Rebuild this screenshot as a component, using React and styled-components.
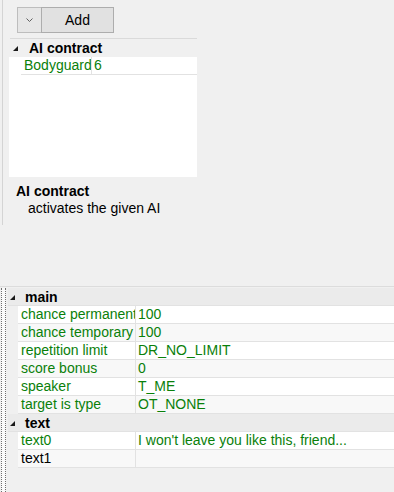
import React from 'react';
import styled, { createGlobalStyle } from 'styled-components';

const GlobalStyle = createGlobalStyle`
  html, body {
    margin: 0;
    padding: 0;
    background: #f0f0f0;
  }
  body {
    font-family: "Liberation Sans", Arial, sans-serif;
    font-size: 14px;
    color: #000;
  }
`;

const Page = styled.div`
  width: 394px;
  height: 492px;
  display: flex;
  flex-direction: column;
  overflow: hidden;
`;

const Top = styled.div`
  height: 286px;
  display: flex;
  align-items: flex-start;
`;

const LeftRule = styled.div`
  width: 1px;
  height: 225px;
  margin-left: 2px;
  background: #d4d4d4;
`;

const Panel = styled.div`
  width: 188px;
  margin-left: 6px;
  display: flex;
  flex-direction: column;
`;

const Toolbar = styled.div`
  display: flex;
  height: 31px;
  padding: 7px 0 0 8px;
  box-sizing: border-box;
`;

const DropButton = styled.button`
  width: 25px;
  height: 26px;
  padding: 0;
  border: 1px solid #bdbdbd;
  background: #e6e6e6;
  display: flex;
  align-items: center;
  justify-content: center;
`;

const AddButton = styled.button`
  width: 73px;
  height: 26px;
  margin-left: -1px;
  padding: 0;
  border: 1px solid #adadad;
  background: #e1e1e1;
  font-family: inherit;
  font-size: 14px;
  color: #000;
`;

const Rule = styled.div`
  height: 1px;
  margin: 7px 0 0 1px;
  background: #dadada;
`;

const Category = styled.div`
  height: 18px;
  display: flex;
  align-items: center;
  font-weight: bold;
  background: ${p => (p.$shade ? '#ebebeb' : 'transparent')};
  border-bottom: ${p => (p.$shade ? '1px solid #e2e2e2' : 'none')};
  box-sizing: border-box;
`;

const Glyph = styled.svg`
  width: 5px;
  height: 5px;
  margin: 1px ${p => p.$gap}px 0 ${p => p.$indent}px;
  flex: none;
`;

const ListBox = styled.div`
  height: 120px;
  background: #fff;
`;

const Row = styled.div`
  display: flex;
  height: 18px;
  padding-left: ${p => p.$margin}px;
  box-sizing: border-box;
`;

const Cells = styled.div`
  flex: 1;
  display: flex;
  background: ${p => (p.$alt ? '#f8f8f8' : '#fff')};
  border-bottom: 1px solid #e2e2e2;
`;

const Label = styled.div`
  width: ${p => p.$width}px;
  padding-left: 3px;
  box-sizing: border-box;
  border-right: 1px solid #e2e2e2;
  line-height: 17px;
  white-space: nowrap;
  overflow: hidden;
  color: ${p => (p.$set ? '#0a800a' : '#000')};
`;

const Value = styled.div`
  flex: 1;
  padding-left: 2px;
  line-height: 17px;
  white-space: nowrap;
  color: #0a800a;
`;

const Help = styled.div`
  padding: 6px 0 0 7px;
  line-height: 17px;
`;

const HelpTitle = styled.div`
  font-weight: bold;
`;

const HelpText = styled.div`
  padding-left: 12px;
`;

const Divider = styled.div`
  height: 1px;
  background: #dcdcdc;
`;

const Bottom = styled.div`
  flex: 1;
  display: flex;
  padding-top: 1px;
`;

const Splitter = styled.div`
  width: 3px;
  margin-left: 1px;
  border-left: 1px dotted #6e6e6e;
  border-right: 1px dotted #6e6e6e;
  background: #fafafa;
`;

const Grid = styled.div`
  flex: 1;
  margin-left: 2px;
  display: flex;
  flex-direction: column;
`;

const Triangle = ({ indent, gap }) => (
  <Glyph $indent={indent} $gap={gap} viewBox="0 0 5 5">
    <polygon points="5,0 5,5 0,5" fill="#1a1a1a" />
  </Glyph>
);

const sections = [
  {
    name: 'main',
    rows: [
      ['chance permanent', '100', true],
      ['chance temporary', '100', true],
      ['repetition limit', 'DR_NO_LIMIT', true],
      ['score bonus', '0', true],
      ['speaker', 'T_ME', true],
      ['target is type', 'OT_NONE', true],
    ],
  },
  {
    name: 'text',
    rows: [
      ['text0', "I won't leave you like this, friend...", true],
      ['text1', '', false],
    ],
  },
];

export default function App() {
  return (
    <Page>
      <GlobalStyle />
      <Top>
        <LeftRule />
        <Panel>
          <Toolbar>
            <DropButton>
              <svg width="7" height="4" viewBox="0 0 7 4">
                <polyline points="0.5,0.5 3.5,3.5 6.5,0.5" fill="none" stroke="#606060" strokeWidth="1" />
              </svg>
            </DropButton>
            <AddButton>Add</AddButton>
          </Toolbar>
          <Rule />
          <Category>
            <Triangle indent={4} gap={11} />
            AI contract
          </Category>
          <ListBox>
            <Row $margin={12}>
              <Cells>
                <Label $width={71} $set>Bodyguard</Label>
                <Value>6</Value>
              </Cells>
            </Row>
          </ListBox>
          <Help>
            <HelpTitle>AI contract</HelpTitle>
            <HelpText>activates the given AI</HelpText>
          </Help>
        </Panel>
      </Top>
      <Divider />
      <Bottom>
        <Splitter />
        <Grid>
          {sections.map(s => (
            <React.Fragment key={s.name}>
              <Category $shade>
                <Triangle indent={2} gap={10} />
                {s.name}
              </Category>
              {s.rows.map(([label, value, set], i) => (
                <Row key={label} $margin={10}>
                  <Cells $alt={i % 2 === 1}>
                    <Label $width={118} $set={set}>{label}</Label>
                    <Value>{value}</Value>
                  </Cells>
                </Row>
              ))}
            </React.Fragment>
          ))}
        </Grid>
      </Bottom>
    </Page>
  );
}
